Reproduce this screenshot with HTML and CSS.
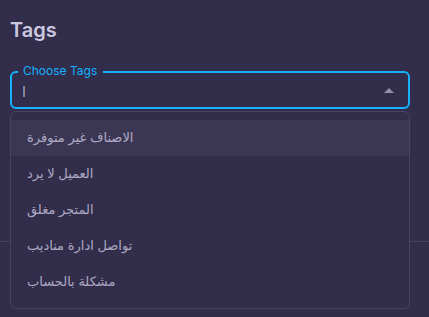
FILE: index.html
```html
<!DOCTYPE html>
<html lang="ar">
<head>
    <meta charset="UTF-8">
    <meta name="viewport" content="width=device-width, initial-scale=1.0">
    <title>Tags</title>
    <link rel="stylesheet" href="styles.css">
</head>
<body>
    <div class="card">
        <h2 class="title">Tags</h2>

        <div class="field">
            <span class="field-label">Choose Tags</span>
            <span class="field-value">ا</span>
            <svg class="field-arrow" viewBox="0 0 24 24" width="24" height="24">
                <path d="M7 14l5-5 5 5z" fill="currentColor"/>
            </svg>
        </div>

        <div class="divider"></div>
    </div>

    <!-- القائمة المنسدلة -->
    <ul class="menu">
        <li class="menu-item active">الاصناف غير متوفرة</li>
        <li class="menu-item">العميل لا يرد</li>
        <li class="menu-item">المتجر مغلق</li>
        <li class="menu-item">تواصل ادارة مناديب</li>
        <li class="menu-item">مشكلة بالحساب</li>
    </ul>
</body>
</html>
```

FILE: styles.css
```css
body {
    margin: 0;
    background: #312d4b;
    font-family: Inter, "DejaVu Sans", sans-serif;
    height: 317px;
    overflow: hidden;
    position: relative;
}

.card {
    padding: 16px 19px 0 10px;
}

.title {
    margin: 0;
    font-size: 20px;
    font-weight: 600;
    line-height: 28px;
    color: rgba(231, 227, 252, 0.87);
}

.field {
    position: relative;
    margin-top: 27px;
    height: 34px;
    border: 2px solid #16b1ff;
    border-radius: 6px;
    display: flex;
    align-items: center;
    padding: 0 7px 0 10px;
}

.field-label {
    position: absolute;
    top: -9px;
    left: 6px;
    padding: 0 6px 0 5px;
    background: #312d4b;
    color: #16b1ff;
    font-size: 12px;
    line-height: 14px;
}

.field-value {
    flex: 1;
    font-size: 14px;
    color: rgba(231, 227, 252, 0.68);
    padding-top: 2px;
}

.field-arrow {
    color: rgba(231, 227, 252, 0.54);
    margin-top: 1px;
}

.divider {
    margin: 132px -19px 0 -10px;
    border-top: 1px solid #48445f;
}

.menu {
    position: absolute;
    top: 111px;
    left: 10px;
    width: 398px;
    margin: 0;
    padding: 8px 0;
    list-style: none;
    background: #312d4b;
    border: 1px solid #46425f;
    border-radius: 6px;
}

.menu-item {
    height: 36px;
    line-height: 35px;
    padding: 0 16px;
    font-size: 13px;
    color: rgba(231, 227, 252, 0.68);
    direction: ltr;
    text-align: left;
}

.menu-item.active {
    background: #3b3654;
}
```
